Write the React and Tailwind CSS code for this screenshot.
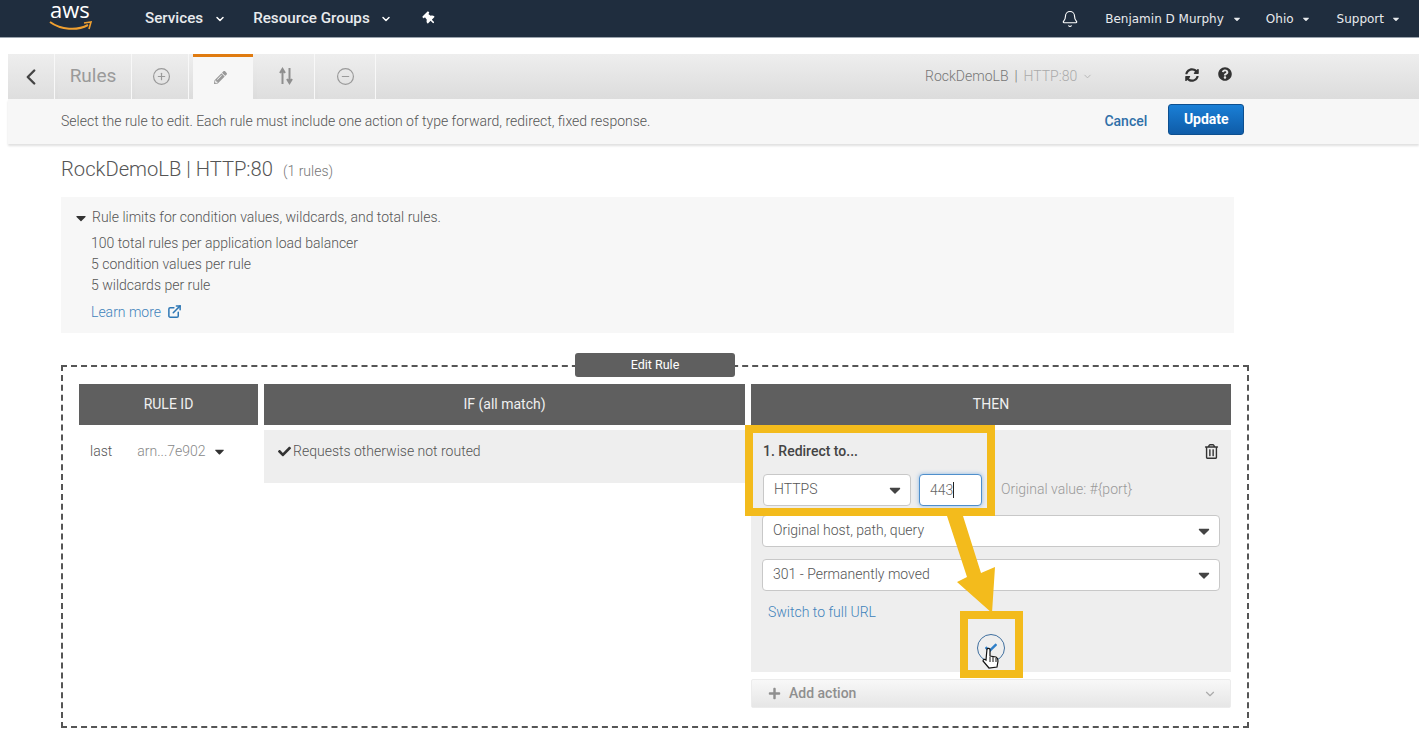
import React from "react";
import {
  ChevronDown,
  ChevronLeft,
  Bell,
  CirclePlus,
  CircleMinus,
  ExternalLink,
} from "lucide-react";
import {
  FaCaretDown,
  FaCheck,
  FaPlus,
  FaRegTrashAlt,
  FaSyncAlt,
  FaQuestionCircle,
  FaThumbtack,
  FaPencilAlt,
} from "react-icons/fa";

function AwsLogo() {
  return (
    <div className="relative w-[44px] h-[32px] mt-[-6px]">
      <span className="absolute left-[1px] top-[1px] text-[22px] leading-[16px] text-white font-['Open_Sans',sans-serif]">
        aws
      </span>
      <svg className="absolute left-0 top-[20px]" width="44" height="12" viewBox="0 0 44 12">
        <path d="M1 2 C12 10 28 11 39 5" fill="none" stroke="#f0a030" strokeWidth="2" />
        <path d="M35 3 L42 2 L40 9" fill="none" stroke="#f0a030" strokeWidth="1.6" />
      </svg>
    </div>
  );
}

function TopNav() {
  return (
    <div className="h-[38px] bg-[#1f2d3e] border-b border-[#9aa3ad] flex items-center text-white">
      <div className="ml-[49px] mr-[52px]">
        <AwsLogo />
      </div>
      <span className="text-[15.2px] font-medium text-[#e8eaed]">Services</span>
      <ChevronDown size={12} strokeWidth={3} className="ml-[11px] mr-[27px]" />
      <span className="text-[15.2px] font-medium text-[#e8eaed]">Resource Groups</span>
      <ChevronDown size={12} strokeWidth={3} className="ml-[10px] mr-[31px]" />
      <FaThumbtack size={13} className="-rotate-45" />
      <div className="ml-auto flex items-center text-[12px] text-[#e8eaed] font-['DejaVu_Sans',sans-serif]">
        <Bell size={18} strokeWidth={1.5} className="mr-[26px] text-white" />
        <span>Benjamin D Murphy</span>
        <FaCaretDown size={10} className="ml-[8px] mr-[24px]" />
        <span>Ohio</span>
        <FaCaretDown size={10} className="ml-[7px] mr-[26px]" />
        <span>Support</span>
        <FaCaretDown size={10} className="ml-[7px] mr-[18px]" />
      </div>
    </div>
  );
}

function Tab({ children, className = "" }) {
  return (
    <div
      className={`h-full flex items-center justify-center bg-gradient-to-b from-[#eeeeee] to-[#dedede] border-r border-[#f8f8f8] text-[#9a9a9a] ${className}`}
    >
      {children}
    </div>
  );
}

function Toolbar() {
  return (
    <div className="ml-2 mt-[16px] h-[45px] flex bg-gradient-to-b from-[#eeeeee] to-[#dcdcdc]">
      <Tab className="w-[47px] mr-[3px]">
        <ChevronLeft size={26} strokeWidth={2.2} className="text-[#444444]" />
      </Tab>
      <Tab className="w-[74px] mr-[3px] pr-[3px]">
        <span className="text-[19px] text-[#9a9a9a]">Rules</span>
      </Tab>
      <Tab className="w-[54px] mr-[4px]">
        <CirclePlus size={19} strokeWidth={1.5} />
      </Tab>
      <div className="w-[60px] mr-[4px] h-full bg-[#f7f7f7] border-t-[3px] border-[#e07b10] flex items-center justify-center pr-[5px] pb-[2px]">
        <FaPencilAlt size={13} className="text-[#9a9a9a]" />
      </div>
      <Tab className="w-[58px] mr-[3px]">
        <svg width="14" height="18" viewBox="0 0 14 18" className="mb-[2px]">
          <path d="M3.5 17 V3 M1 6 L3.5 2 L6 6 M10.5 1 V15 M8 12 L10.5 16 L13 12" fill="none" stroke="#8f8f8f" strokeWidth="2" />
        </svg>
      </Tab>
      <Tab className="w-[58px] mr-[4px] pr-[2px]">
        <CircleMinus size={19} strokeWidth={1.5} />
      </Tab>
      <div className="flex-1 flex items-center font-light">
        <span className="ml-[545px] text-[14px] text-[#777777]">RockDemoLB</span>
        <span className="ml-[6px] text-[14px] text-[#777777]">|</span>
        <span className="ml-[6px] text-[14px] text-[#aaaaaa]">HTTP:80</span>
        <ChevronDown size={11} className="ml-[5px] text-[#b4b4b4]" />
        <FaSyncAlt size={14} className="ml-[92px] mb-[4px] text-[#333333]" />
        <FaQuestionCircle size={14} className="ml-[19px] mb-[5px] text-[#333333]" />
      </div>
    </div>
  );
}

function SubBar() {
  return (
    <div className="ml-2 h-[45px] bg-[#f7f7f7] shadow-[0_2px_2px_rgba(0,0,0,0.12)] flex items-center pl-[53px]">
      <span className="text-[14px] font-light text-[#555555]">
        Select the rule to edit. Each rule must include one action of type forward, redirect, fixed response.
      </span>
      <span className="ml-[454px] text-[14px] font-medium text-[#2f6fa8]">Cancel</span>
      <button className="ml-[21px] mb-[5px] w-[76px] h-[31px] rounded-[3px] bg-gradient-to-b from-[#1a7fd6] to-[#0f5ca8] border border-[#0d4f8f] text-white text-[14px] font-bold">
        Update
      </button>
    </div>
  );
}

function Limits() {
  return (
    <div className="mt-[19px] ml-[61px] w-[1173px] h-[136px] bg-[#f7f7f7] pt-[10px] pl-[14px] text-[14px] font-light leading-[21px] text-[#555555]">
      <div className="flex items-center">
        <FaCaretDown size={16} className="text-[#333333] mr-[3px] ml-[-2px]" />
        <span>Rule limits for condition values, wildcards, and total rules.</span>
      </div>
      <div className="pl-[16px] mt-[5px]">
        <div>100 total rules per application load balancer</div>
        <div>5 condition values per rule</div>
        <div>5 wildcards per rule</div>
        <div className="flex items-center mt-[6px] text-[#3f83bb]">
          Learn more
          <ExternalLink size={15} strokeWidth={2.4} className="ml-[6px] mb-[2px] text-[#2f78b5]" />
        </div>
      </div>
    </div>
  );
}

function SelectBox({ label, className = "" }) {
  return (
    <div
      className={`h-[32px] bg-white border border-[#c8c8c8] rounded-[4px] flex items-center justify-between pl-[10px] pr-[6px] text-[14px] font-light text-[#555555] ${className}`}
    >
      <span className="mb-[2px]">{label}</span>
      <FaCaretDown size={18} className="text-[#444444]" />
    </div>
  );
}

function ThenPanel() {
  return (
    <div className="bg-[#eeeeee] h-[242px] mt-[5px] relative pl-[11px] pr-[11px] pt-[12px] text-[14px]">
      <div className="flex justify-between items-center h-[18px]">
        <span className="ml-[1px] font-medium text-[#444444]">1. Redirect to...</span>
        <FaRegTrashAlt size={15} className="text-[#333333] mr-[1px]" />
      </div>
      <div className="flex items-center mt-[14px]">
        <SelectBox label="HTTPS" className="w-[148px] ml-[1px]" />
        <div className="ml-[8px] w-[63px] h-[32px] bg-white border border-[#4f8fcc] rounded-[4px] shadow-[0_0_4px_rgba(80,150,220,0.6)] flex items-center pl-[10px] font-light text-[#666666]">
          443<span className="w-px h-[16px] bg-[#222222]" />
        </div>
        <span className="ml-[19px] mb-[2px] font-light text-[#999999]">Original value: #{"{port}"}</span>
      </div>
      <SelectBox label="Original host, path, query" className="mt-[9px]" />
      <SelectBox label="301 - Permanently moved" className="mt-[12px]" />
      <div className="mt-[11px] ml-[6px] font-light text-[#3f83bb]">Switch to full URL</div>
    </div>
  );
}

function RuleTable() {
  return (
    <div className="relative mt-[32px] ml-[61px] w-[1188px] h-[363px] border-2 border-dashed border-[#555555] pt-[17px] pl-[16px]">
      <div className="absolute left-[512px] top-[-14px] w-[160px] h-[24px] rounded-[3px] bg-[#5f5f5f] text-white text-[12.5px] flex items-center justify-center">
        Edit Rule
      </div>
      <div className="flex gap-[6px]">
        <div className="w-[179px]">
          <div className="h-[41px] bg-[#5f5f5f] flex items-center justify-center text-[14px] text-[#f0f0f0]">
            RULE ID
          </div>
          <div className="flex items-center h-[20px] mt-[16px] pl-[11px] text-[14px] font-light">
            <span className="text-[#555555]">last</span>
            <span className="ml-[25px] text-[#888888]">arn...7e902</span>
            <FaCaretDown size={15} className="ml-[6px] text-[#333333]" />
          </div>
        </div>
        <div className="w-[481px]">
          <div className="h-[41px] bg-[#5f5f5f] flex items-center justify-center text-[14px] text-[#f0f0f0]">
            IF (all match)
          </div>
          <div className="mt-[5px] h-[53px] bg-[#eeeeee] pt-[11px] pl-[14px] flex items-start text-[14px] font-light text-[#555555]">
            <FaCheck size={13} className="text-[#333333] mt-[4px] mr-[2px]" />
            Requests otherwise not routed
          </div>
        </div>
        <div className="w-[480px]">
          <div className="h-[41px] bg-[#5f5f5f] flex items-center justify-center text-[14px] text-[#f0f0f0]">
            THEN
          </div>
          <ThenPanel />
          <div className="mt-[7px] h-[29px] rounded-[2px] border border-[#ececec] bg-gradient-to-b from-[#f8f8f8] to-[#e6e6e6] flex items-center pl-[16px] pr-[13px] text-[14px] font-medium text-[#8f8f8f]">
            <FaPlus size={13} className="mr-[8px]" />
            Add action
            <ChevronDown size={14} className="ml-auto text-[#aaaaaa]" />
          </div>
        </div>
      </div>
    </div>
  );
}

// yellow callout boxes and arrow drawn over the page
function Annotations() {
  return (
    <>
      <div className="absolute left-[745px] top-[425px] w-[250px] h-[91px] border-[8px] border-[#f3bb1c]" />
      <div className="absolute left-[960px] top-[611px] w-[63px] h-[67px] border-[8px] border-[#f3bb1c]" />
      <svg className="absolute left-[920px] top-[510px]" width="90" height="110" viewBox="0 0 90 110">
        <path d="M27 6 L43 6 L61 63 L75 57 L72 103 L37 72 L47 67 Z" fill="#f3bb1c" />
      </svg>
      <div className="absolute left-[977px] top-[634px] w-[28px] h-[28px] rounded-full border border-[#3f6f9f] flex items-center justify-center">
        <FaCheck size={12} className="text-[#2f7fc8]" />
      </div>
      <svg className="absolute left-[981px] top-[647px]" width="20" height="24" viewBox="0 0 20 24">
        <path
          d="M6 2 C7 1 9 1 9 3 L9 9 L15 10 C17 11 17 12 17 14 L16 20 L8 21 L2 14 C2 12 4 12 5 13 Z"
          fill="#ffffff"
          stroke="#111111"
          strokeWidth="1.2"
        />
        <path d="M9 10 V15 M12 10 V15 M15 11 V15" stroke="#111111" strokeWidth="1" />
      </svg>
    </>
  );
}

export default function App() {
  return (
    <div className="relative w-[1419px] h-[756px] overflow-hidden bg-white font-['Roboto',sans-serif]">
      <TopNav />
      <Toolbar />
      <SubBar />
      <div className="mt-[10px] ml-[61px] flex items-baseline h-[24px]">
        <span className="text-[20.2px] font-light text-[#555555]">RockDemoLB | HTTP:80</span>
        <span className="ml-[10px] text-[14px] font-light text-[#777777]">(1 rules)</span>
      </div>
      <Limits />
      <RuleTable />
      <Annotations />
    </div>
  );
}
